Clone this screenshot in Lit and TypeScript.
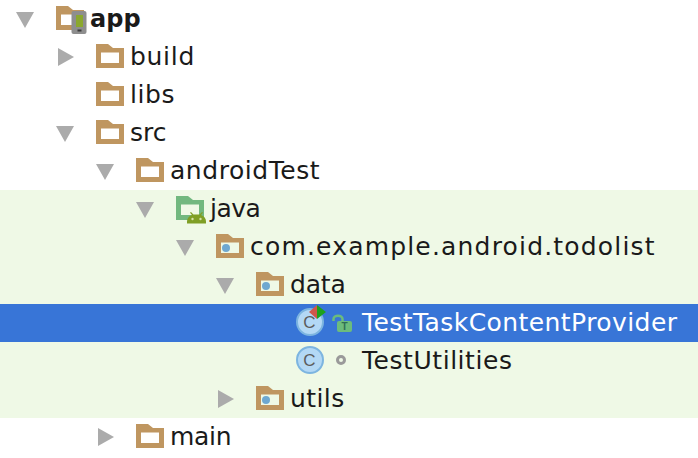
import { LitElement, html, css, svg } from "lit";
import { customElement } from "lit/decorators.js";
import { classMap } from "lit/directives/class-map.js";

type Icon = "app" | "folder" | "java" | "package" | "class" | "classLock";

type Row = {
  level: number;
  arrow?: "down" | "right";
  icon: Icon;
  label: string;
  // per-label tracking, the original face has different proportions than DejaVu
  track: number;
  bold?: boolean;
  green?: boolean;
  selected?: boolean;
};

const ROWS: Row[] = [
  { level: 0, arrow: "down", icon: "app", label: "app", track: 0, bold: true },
  { level: 1, arrow: "right", icon: "folder", label: "build", track: 0.7 },
  { level: 1, icon: "folder", label: "libs", track: 0.55 },
  { level: 1, arrow: "down", icon: "folder", label: "src", track: 0 },
  { level: 2, arrow: "down", icon: "folder", label: "androidTest", track: 0.55 },
  { level: 3, arrow: "down", icon: "java", label: "java", track: -0.5, green: true },
  { level: 4, arrow: "down", icon: "package", label: "com.example.android.todolist", track: 1.18, green: true },
  { level: 5, arrow: "down", icon: "package", label: "data", track: -0.2, green: true },
  { level: 6, icon: "classLock", label: "TestTaskContentProvider", track: 0.43, selected: true },
  { level: 6, icon: "class", label: "TestUtilities", track: 0.55, green: true },
  { level: 5, arrow: "right", icon: "package", label: "utils", track: 0.4, green: true },
  { level: 2, arrow: "right", icon: "folder", label: "main", track: -0.3 },
];

const TAN = "#bf9660";

function folderPath(color: string) {
  return svg`<path
    fill-rule="evenodd"
    fill=${color}
    d="M0 0h12l5 4h11v20H0zM5 8.500V19h18V8.500z"
  />`;
}

function classBadge() {
  return svg`
    <circle cx="14" cy="18" r="13" fill="#b3d8f5" stroke="#7db5e0" stroke-width="2" />
    <text x="13.500" y="24" text-anchor="middle" class="glyph">C</text>
  `;
}

@customElement("app-root")
export class AppRoot extends LitElement {
  private renderArrow(arrow?: "down" | "right") {
    if (!arrow) return html`<span class="arrow"></span>`;
    return html`<svg class="arrow" width="40" height="38" viewBox="0 0 40 38">
      ${arrow === "down"
        ? svg`<path fill="#ababab" d="M0 12h18l-9 16z" />`
        : svg`<path fill="#ababab" d="M2 10l16 9-16 9z" />`}
    </svg>`;
  }

  private renderIcon(icon: Icon) {
    switch (icon) {
      case "app":
        return html`<svg class="icon" width="34" height="38" viewBox="0 0 34 38">
          <g transform="translate(0 6)">${folderPath(TAN)}</g>
          <rect x="15.500" y="11" width="15" height="23" rx="2" fill="#8e8e8e" />
          <rect x="20" y="15" width="7" height="12" fill="#8ba82e" />
          <rect x="21.500" y="29.500" width="4" height="2" fill="#3c3c3c" />
        </svg>`;
      case "folder":
        return html`<svg class="icon" width="34" height="38" viewBox="0 0 34 38">
          <g transform="translate(0 6)">${folderPath(TAN)}</g>
        </svg>`;
      case "java":
        return html`<svg class="icon" width="34" height="38" viewBox="0 0 34 38">
          <g transform="translate(0 6)">${folderPath("#72b87f")}</g>
          <path
            fill="#7f9f25"
            d="M11 33.500v-2c0-3 2-5.500 5-6.500l-2-2.200 1-.8 2.400 2.500h6.200L26 22l1 .8-2 2.200c3 1 5 3.500 5 6.500v2z"
          />
          <circle cx="16.500" cy="29" r="1.200" fill="#d6e0a8" />
          <circle cx="24.500" cy="29" r="1.200" fill="#d6e0a8" />
        </svg>`;
      case "package":
        return html`<svg class="icon" width="34" height="38" viewBox="0 0 34 38">
          <g transform="translate(0 6)">${folderPath(TAN)}</g>
          <circle cx="10" cy="20" r="4" fill="#6fa8d0" />
        </svg>`;
      case "class":
        return html`<svg class="icon" width="66" height="38" viewBox="0 0 66 38">
          ${classBadge()}
          <circle cx="45" cy="18" r="3.500" fill="none" stroke="#9a9a9a" stroke-width="3" />
        </svg>`;
      case "classLock":
        return html`<svg class="icon" width="66" height="38" viewBox="0 0 66 38">
          ${classBadge()}
          <path fill="#d0574a" d="M13 8l8-7v14z" />
          <path fill="#1da11d" d="M21 1l9 7-9 7z" />
          <path
            fill="none"
            stroke="#6cbc7c"
            stroke-width="2.500"
            d="M37.500 17v-2c0-4.500 9-4.500 9 0v2"
          />
          <rect x="41" y="17" width="15" height="11" rx="2" fill="#6cbc7c" />
          <text x="48.500" y="26" text-anchor="middle" class="lock-mark">T</text>
        </svg>`;
    }
  }

  override render() {
    return html`
      <div class="tree">
        ${ROWS.map(
          (r) => html`
            <div
              class=${classMap({ row: true, green: !!r.green, selected: !!r.selected })}
              style="padding-left:${16 + r.level * 40}px"
            >
              ${this.renderArrow(r.arrow)} ${this.renderIcon(r.icon)}
              <span
                class=${classMap({ label: true, bold: !!r.bold })}
                style="letter-spacing:${r.track}px"
                >${r.label}</span
              >
            </div>
          `,
        )}
      </div>
    `;
  }

  static override styles = css`
    :host {
      display: block;
      width: 698px;
      height: 458px;
      background: #fff;
      overflow: hidden;
    }
    .tree {
      display: flex;
      flex-direction: column;
    }
    .row {
      display: flex;
      align-items: center;
      height: 38px;
      white-space: nowrap;
    }
    .green {
      background: #eff9e6;
    }
    .selected {
      background: #3875d7;
      color: #fff;
    }
    .arrow {
      display: block;
      flex: none;
      width: 40px;
      height: 38px;
    }
    .icon {
      display: block;
      flex: none;
    }
    .label {
      font-family: "DejaVu Sans", sans-serif;
      font-size: 25px;
      line-height: 38px;
      color: #1a1a1a;
    }
    .selected .label {
      color: #fff;
    }
    .bold {
      font-size: 24px;
      font-weight: 700;
    }
    .glyph {
      font-family: "Liberation Sans", sans-serif;
      font-size: 17px;
      fill: #5c5c5c;
    }
    .lock-mark {
      font-family: "Liberation Sans", sans-serif;
      font-size: 10px;
      font-weight: 700;
      fill: #2f6f55;
    }
  `;
}
